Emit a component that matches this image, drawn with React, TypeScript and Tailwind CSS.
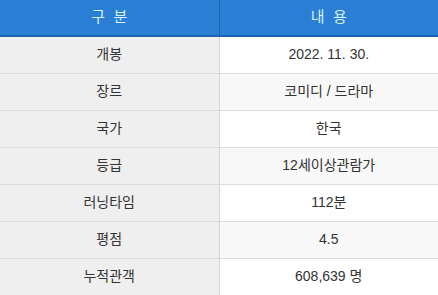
const rows = [
  ["개봉", "2022. 11. 30."],
  ["장르", "코미디 / 드라마"],
  ["국가", "한국"],
  ["등급", "12세이상관람가"],
  ["러닝타임", "112분"],
  ["평점", "4.5"],
  ["누적관객", "608,639 명"],
];

export default function App() {
  return (
    <div className="w-[438px] bg-white font-['Liberation_Sans','Noto_Sans_CJK_KR',sans-serif] text-[14px] text-[#333]">
      <table className="w-full table-fixed border-collapse">
        <thead>
          <tr className="bg-[#2a7fd5] text-[#d9f3ff] text-[15px]">
            <th className="h-[36px] font-normal border-b-2 border-b-[#1e65b0] border-r border-r-[#1e65b0]">구&nbsp;&nbsp;분</th>
            <th className="h-[36px] font-normal border-b-2 border-b-[#1e65b0]">내&nbsp;&nbsp;용</th>
          </tr>
        </thead>
        <tbody>
          {rows.map(([label, value], i) => (
            <tr key={label}>
              <td className="h-[37px] text-center bg-[#efefef] border-b border-b-[#dcdcdc] border-r border-r-[#d4d4d4]">
                {label}
              </td>
              <td
                className={`h-[37px] text-center border-b border-b-[#dcdcdc] ${
                  i % 2 === 1 ? "bg-[#f8f8f8]" : "bg-white"
                }`}
              >
                {value}
              </td>
            </tr>
          ))}
        </tbody>
      </table>
    </div>
  );
}
